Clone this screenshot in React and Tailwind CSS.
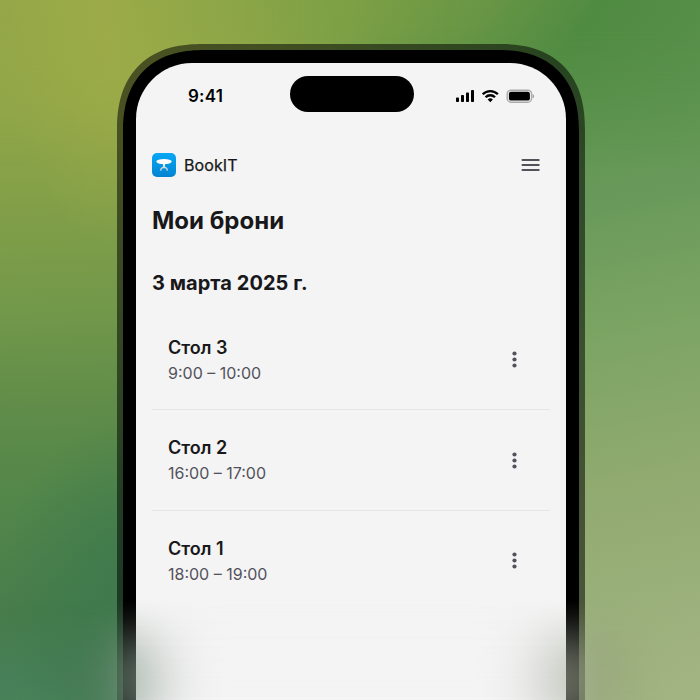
import React from "react";

const bookings = [
  { table: "Стол 3", time: "9:00 – 10:00" },
  { table: "Стол 2", time: "16:00 – 17:00" },
  { table: "Стол 1", time: "18:00 – 19:00" },
];

function Backdrop() {
  return (
    <div className="absolute inset-0 bg-[linear-gradient(168deg,#528c45_8%,#5a924b_22%,#68995a_38%,#7ba463_54%,#90aa70_72%,#a3b583_98%)]">
      <div className="absolute inset-0 bg-[radial-gradient(ellipse_130px_170px_at_130px_590px,#3c784dd0_0%,#3c784d80_45%,#3c784d00_100%),linear-gradient(178deg,#98aa48_0%,#8fa648_14%,#84a048_27%,#72984a_43%,#5f8c49_57%,#52864a_70%,#487d4b_85%,#49805a_94%,#4d865c_100%)] [mask-image:linear-gradient(90deg,#000_40%,transparent_60%)]">
        <div className="h-full w-full bg-[radial-gradient(ellipse_130px_220px_at_130px_30px,#a0ac48d0_0%,#a0ac4800_100%)]" />
      </div>
      <div className="absolute inset-0 bg-[linear-gradient(125deg,#7da045_29%,#6a9745_40%,#508b42_50.5%,#568f48_60%,#5c934d_70%)] [mask-image:linear-gradient(180deg,#000_4%,transparent_24%)]">
        <div className="h-full w-full bg-[linear-gradient(80deg,#94a748_15%,#9cab48_27%,#7fa146_57%,#6a9745_75%)] [mask-image:linear-gradient(90deg,#000_35%,transparent_65%)]" />
      </div>
    </div>
  );
}

function StatusIcons() {
  return (
    <svg width="80" height="16" viewBox="0 0 80 16" fill="#000">
      <rect x="1" y="9.5" width="3" height="4.5" rx=".8" />
      <rect x="6" y="7" width="3" height="7" rx=".8" />
      <rect x="11" y="4.5" width="3" height="9.5" rx=".8" />
      <rect x="16" y="2" width="3" height="12" rx=".8" />
      <g fill="none" stroke="#000" strokeWidth="2.3">
        <path d="M27.7 6.2a10.7 10.7 0 0 1 15.2 0" />
        <path d="M30.6 9.2a6.6 6.6 0 0 1 9.4 0" />
      </g>
      <path d="M35.3 14.2l-2.6-2.7a3.8 3.8 0 0 1 5.2 0z" />
      <rect x="52.2" y="2.2" width="24.4" height="12" rx="3.8" fill="none" stroke="#000" strokeOpacity=".3" strokeWidth="1.4" />
      <rect x="53.9" y="3.8" width="21" height="8.8" rx="2.2" />
      <path d="M77.7 6.2v4c.9-.4 1.4-1.1 1.4-2s-.5-1.6-1.4-2z" fillOpacity=".35" />
    </svg>
  );
}

function Logo() {
  return (
    <svg width="24" height="24" viewBox="0 0 24 24">
      <defs>
        <linearGradient id="tile" x1="0" y1="0" x2="0" y2="1">
          <stop offset="0" stopColor="#06a8f6" />
          <stop offset="1" stopColor="#0284d2" />
        </linearGradient>
        <linearGradient id="leg" x1="0" y1="0" x2="0" y2="1">
          <stop offset="0" stopColor="#f3f7fa" />
          <stop offset="1" stopColor="#b3c0ca" />
        </linearGradient>
      </defs>
      <rect width="24" height="24" rx="5" fill="url(#tile)" />
      <ellipse cx="12" cy="8.6" rx="7.7" ry="2.7" fill="#fff" />
      <path d="M11 11h2v2.7c1.9.2 3 1.7 3.100 4h-1.500c-.2-1.700-.9-2.500-2-2.500h-1.200c-1.100 0-1.800.8-2 2.500H7.900c.1-2.300 1.200-3.800 3.100-4z" fill="url(#leg)" />
    </svg>
  );
}

function Booking({ table, time }) {
  return (
    <li className="flex h-[100.8px] items-center justify-between border-b border-[#e5e5e6] pt-[1.6px] pr-[33px] pl-4 last:border-b-0 last:pt-0">
      <div>
        <div className="text-[18px] leading-[26px] font-semibold text-[#18181b]">{table}</div>
        <div className="text-[16px] leading-6 text-[#52525b]">{time}</div>
      </div>
      <svg width="5" height="17" viewBox="0 0 5 17" fill="#52525b">
        <circle cx="2.5" cy="2.5" r="2.1" />
        <circle cx="2.5" cy="8.5" r="2.1" />
        <circle cx="2.5" cy="14.5" r="2.1" />
      </svg>
    </li>
  );
}

function Screen() {
  return (
    <div className="h-full w-full rounded-[56px] bg-[#f4f4f4]">
      <div className="flex h-[66px] items-center justify-between pr-[31px] pl-[52px]">
        <span className="text-[17px] leading-none font-semibold tracking-[0.2px] text-black">9:41</span>
        <StatusIcons />
      </div>
      <header className="mt-6 flex h-6 items-center justify-between pr-[26px] pl-4">
        <div className="flex items-center gap-2">
          <Logo />
          <span className="text-[16px] leading-6 tracking-[0.1px] text-[#18181b] [-webkit-text-stroke:0.25px_#18181b]">BookIT</span>
        </div>
        <svg width="19" height="14" viewBox="0 0 19 14" stroke="#52525b" strokeWidth="1.8" strokeLinecap="round">
          <path d="M1.4 2h16.4M1.4 7h16.4M1.4 12h16.4" />
        </svg>
      </header>
      <main className="px-4">
        <h1 className="mt-6 text-[24px] leading-10 font-bold text-[#18181b]">Мои брони</h1>
        <h2 className="mt-[26px] text-[20px] leading-8 font-bold tracking-[0.05px] text-[#18181b]">3 марта 2025 г.</h2>
        <ul className="mt-[10px]">
          {bookings.map((b) => (
            <Booking key={b.table} {...b} />
          ))}
        </ul>
      </main>
    </div>
  );
}

export default function App() {
  return (
    <div className="relative h-[700px] w-[700px] overflow-hidden font-['Inter',sans-serif]">
      <Backdrop />
      <div className="relative mt-11 ml-[117px] h-[920px] w-[468px] rounded-[86px] bg-black/52 p-[6px] [corner-shape:superellipse(1.25)]">
        <div className="h-full w-full rounded-[82px] bg-black p-[13px] [corner-shape:superellipse(1.25)]">
          <Screen />
        </div>
        <div className="absolute top-8 left-[173px] h-9 w-[124px] rounded-full bg-black" />
      </div>
      <div className="absolute inset-x-0 bottom-0 h-[100px] backdrop-blur-[38px] [mask-image:linear-gradient(180deg,transparent,#000)]" />
    </div>
  );
}
